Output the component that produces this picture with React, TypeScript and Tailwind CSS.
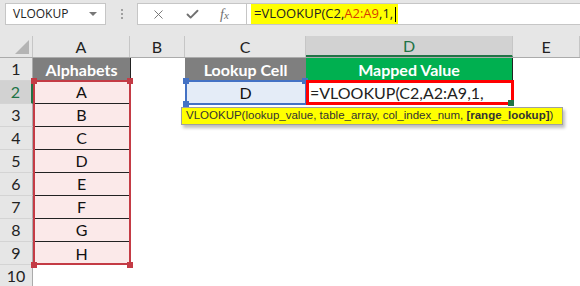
import { X, Check } from 'lucide-react';

const cols = [
  { id: 'A', w: 'w-[97px]' },
  { id: 'B', w: 'w-[55px]' },
  { id: 'C', w: 'w-[121px]' },
  { id: 'D', w: 'w-[207px]' },
  { id: 'E', w: 'flex-1' },
];

const letters = ['A', 'B', 'C', 'D', 'E', 'F', 'G', 'H'];

const RowHead = ({ n, active }: { n: number; active?: boolean }) => (
  <div
    className={`w-[33px] h-full flex items-center justify-center border-b border-[#d4d4d4] text-[16px] ${
      active ? 'bg-[#d2d2d2] border-r-2 border-r-[#217346] text-[#217346]' : 'bg-[#e6e6e6] border-r border-r-[#ababab] text-[#222]'
    }`}
  >
    {n}
  </div>
);

const Handle = ({ cls }: { cls: string }) => <div className={`absolute w-[6px] h-[6px] ${cls}`} />;

export default function App() {
  const font = { fontFamily: 'Lato, "Liberation Sans", sans-serif' };
  return (
    <div className="w-[580px] h-[286px] bg-[#e6e6e6] overflow-hidden relative" style={font}>
      {/* formula bar */}
      <div className="flex items-stretch h-[22px] mt-[3px] pl-[5px]" style={{ fontFamily: '"Open Sans", "Liberation Sans", sans-serif' }}>
        <div className="w-[101px] bg-white border border-[#c6c6c6] flex items-center justify-between pl-[7px] pr-[8px] text-[12px] text-[#222]">
          <span>VLOOKUP</span>
          <span className="w-0 h-0 border-l-[4px] border-r-[4px] border-t-[4px] border-l-transparent border-r-transparent border-t-[#777]" />
        </div>
        <div className="w-[31px] flex flex-col items-center justify-center gap-[2px]">
          <span className="w-[2px] h-[2px] bg-[#a0a0a0]" />
          <span className="w-[2px] h-[2px] bg-[#a0a0a0]" />
          <span className="w-[2px] h-[2px] bg-[#a0a0a0]" />
        </div>
        <div className="w-[110px] bg-white border border-[#c6c6c6] flex items-center text-[#707070]">
          <X className="ml-[13px] w-[15px] h-[15px]" strokeWidth={1.5} />
          <Check className="ml-[19px] w-[15px] h-[15px]" strokeWidth={3} />
          <span className="ml-[20px] text-[14px] italic" style={{ fontFamily: '"Liberation Serif", serif' }}>
            f<span className="text-[11px]">x</span>
          </span>
        </div>
        <div className="flex-1 bg-white border-y border-[#c6c6c6] flex items-stretch pl-[4px]">
          <div className="w-[147px] bg-[#ffff00] flex items-center pl-[3px] text-[13px] text-[#222] whitespace-nowrap">
            <span>=VLOOKUP(C2,</span>
            <span className="text-[#d83b01]">A2:A9</span>
            <span>,1,</span>
            <span className="w-px h-[15px] bg-black ml-[2px]" />
          </div>
        </div>
      </div>

      {/* column headers */}
      <div className="flex h-[22px] mt-[11px] border-b border-[#ababab] text-[16px] text-[#222]">
        <div className="w-[33px] bg-[#e6e6e6] border-r border-[#c6c6c6] flex items-end justify-end p-[3px]">
          <svg width="14" height="14" viewBox="0 0 14 14">
            <polygon points="14,0 14,14 0,14" fill="#b4b4b4" />
          </svg>
        </div>
        {cols.map((c) => (
          <div
            key={c.id}
            className={`${c.w} flex items-center justify-center border-r border-[#c6c6c6] ${
              c.id === 'D' ? 'bg-[#d2d2d2] text-[#217346] border-b-2 border-b-[#217346]' : 'bg-[#e6e6e6]'
            }`}
          >
            {c.id}
          </div>
        ))}
      </div>

      {/* rows */}
      <div className="bg-white relative text-[16px] text-[#111]">
        <div className="flex h-[23px]">
          <RowHead n={1} />
          <div className="w-[97px] bg-[#7f7f7f] text-white font-bold flex items-center justify-center">Alphabets</div>
          <div className="w-[55px] bg-white border-l border-[#222]" />
          <div className="w-[121px] bg-[#7f7f7f] text-white font-bold flex items-center justify-center">Lookup Cell</div>
          <div className="w-[207px] bg-[#00b050] text-white font-bold flex items-center justify-center border-r border-[#222]">Mapped Value</div>
          <div className="flex-1" />
        </div>
        {letters.map((l, i) => (
          <div key={l} className="flex h-[23px]">
            <RowHead n={i + 2} active={i === 0} />
            <div className={`w-[97px] bg-[#fbe9e9] flex items-center justify-center ${i < 7 ? 'border-b border-[#222]' : ''}`}>{l}</div>
            <div className="w-[55px]" />
            {i === 0 ? (
              <>
                <div className="w-[121px] bg-[#e4ecf7] flex items-center justify-center">D</div>
                <div className="w-[207px] flex items-center pl-[4px] text-[16px] text-[#222]">=VLOOKUP(C2,A2:A9,1,</div>
              </>
            ) : null}
          </div>
        ))}
        <div className="flex h-[23px]">
          <RowHead n={10} />
        </div>

        {/* A2:A9 range */}
        <div className="absolute left-[33px] top-[22px] w-[98px] h-[185px] border-2 border-[#c43b45] pointer-events-none" />
        <Handle cls="left-[31px] top-[20px] bg-[#c43b45]" />
        <Handle cls="left-[127px] top-[20px] bg-[#c43b45]" />
        <Handle cls="left-[31px] top-[204px] bg-[#c43b45]" />
        <Handle cls="left-[127px] top-[204px] bg-[#c43b45]" />

        {/* C2 range */}
        <div className="absolute left-[185px] top-[22px] w-[122px] h-[25px] border-2 border-[#4472c4]" />
        <Handle cls="left-[183px] top-[20px] bg-[#4472c4]" />
        <Handle cls="left-[183px] top-[43px] bg-[#4472c4]" />
        <Handle cls="left-[302px] top-[20px] bg-[#4472c4]" />

        {/* D2 active */}
        <div className="absolute left-[306px] top-[22px] w-[208px] h-[25px] border-[3px] border-[#ff0000]" />
        <Handle cls="left-[508px] top-[42px] w-[4px] h-[4px] bg-[#217346]" />

        {/* tooltip */}
        <div
          className="absolute left-[181px] top-[49px] w-[382px] h-[18px] bg-[#ffff00] border border-[#a0a0a0] shadow-[2px_3px_3px_rgba(0,0,0,0.25)] flex items-center pl-[4px] text-[11.5px] text-[#333] whitespace-nowrap"
          style={{ fontFamily: '"Liberation Sans", sans-serif' }}
        >
          <span>VLOOKUP(lookup_value, table_array, col_index_num,&nbsp;</span>
          <b>[range_lookup]</b>
          <span>)</span>
        </div>
      </div>
    </div>
  );
}
